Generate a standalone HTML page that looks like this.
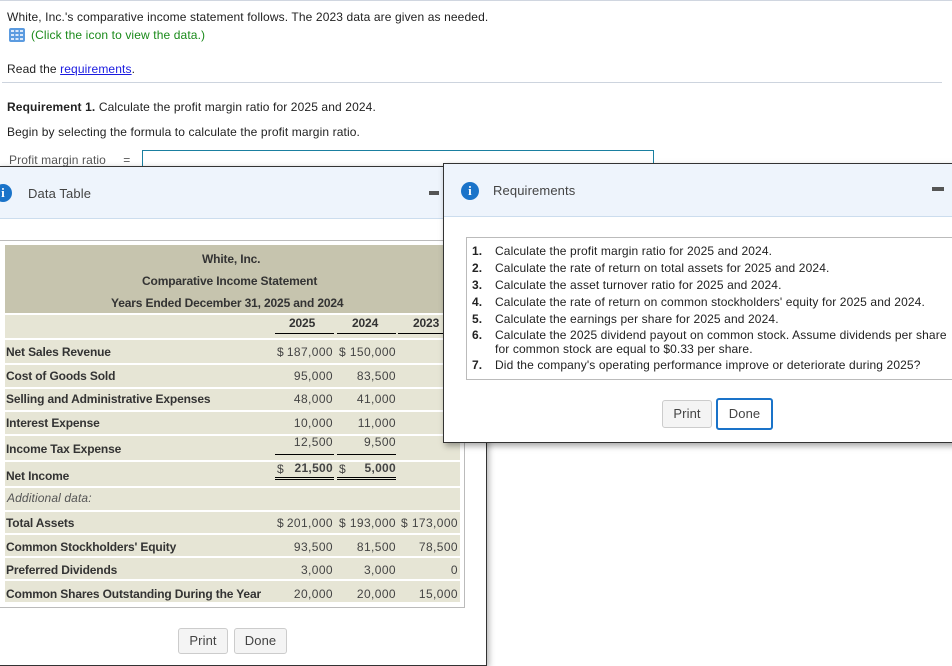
<!DOCTYPE html>
<html><head><style>
*{margin:0;padding:0;box-sizing:border-box}
body{width:952px;height:646px;overflow:hidden;background:#fff;font-family:"Liberation Sans",Arial,sans-serif;font-size:12px;color:#222;position:relative;letter-spacing:0.12px}
.a{position:absolute;white-space:nowrap}
.b{font-weight:bold;color:#333;letter-spacing:-0.15px}
.n{position:absolute;text-align:right;white-space:nowrap;color:#444;letter-spacing:0.4px}
.row{position:absolute;left:5px;width:455px;background:#e6e5d5;border-top:2px solid #fff}
.ul{position:absolute;height:1px;background:#000}
.icon{position:absolute;width:18px;height:18px;border-radius:50%;background:#1a73c9;color:#fff;font:bold 13px "Liberation Serif",serif;text-align:center;line-height:18px}
.btn{position:absolute;border:1px solid #ccc;border-radius:3px;background:#f4f4f4;color:#444;font-size:13px;text-align:center}
</style></head><body>
<div class="a" style="left:0;top:0;width:952px;height:1px;background:#d0d6e0"></div>
<div class="a" style="left:7px;top:10px">White, Inc.'s comparative income statement follows. The 2023 data are given as needed.</div>
<svg class="a" style="left:9px;top:28px" width="16" height="14" viewBox="0 0 16 14"><rect width="16" height="14" rx="2" fill="#5b9be0"/><g fill="#dbe9fb"><rect x="2" y="2" width="3" height="2"/><rect x="6.5" y="2" width="3" height="2"/><rect x="11" y="2" width="3" height="2"/><rect x="2" y="6" width="3" height="2"/><rect x="6.5" y="6" width="3" height="2"/><rect x="11" y="6" width="3" height="2"/><rect x="2" y="10" width="3" height="2"/><rect x="6.5" y="10" width="3" height="2"/><rect x="11" y="10" width="3" height="2"/></g></svg>
<div class="a" style="left:31px;top:28px;color:#1a8a1a">(Click the icon to view the data.)</div>
<div class="a" style="left:7px;top:62px">Read the <span style="color:#1a1ae0;text-decoration:underline">requirements</span>.</div>
<div class="a" style="left:2px;top:82px;width:940px;height:1px;background:#cdd4de"></div>
<div class="a" style="left:7px;top:100px"><b>Requirement 1.</b> Calculate the profit margin ratio for 2025 and 2024.</div>
<div class="a" style="left:7px;top:125px">Begin by selecting the formula to calculate the profit margin ratio.</div>
<div class="a" style="left:9px;top:153px;color:#555">Profit margin ratio &nbsp;&nbsp;&nbsp;&nbsp;=</div>
<div class="a" style="left:142px;top:150px;width:512px;height:20px;border:1px solid #1a7fa0"></div>

<div class="a" style="left:-2px;top:166px;width:489px;height:500px;background:#fff;border:1px solid #333;box-shadow:2px 2px 6px rgba(0,0,0,.3)"></div>
<div class="a" style="left:-1px;top:167px;width:487px;height:52px;background:#eef4fc;border-bottom:1px solid #cde"></div>
<div class="icon" style="left:-6px;top:184px">i</div>
<div class="a" style="left:28px;top:186px;font-size:13px;color:#444">Data Table</div>
<div class="a" style="left:429px;top:191px;width:10px;height:4px;background:#555"></div>
<div class="a" style="left:0;top:240px;width:465px;height:368px;border:1px solid #bbb;border-left:none"></div>
<div class="a" style="left:5px;top:245px;width:455px;height:68px;background:#c6c4ae"></div>
<div class="a b" style="left:202px;top:252px">White, Inc.</div>
<div class="a b" style="left:142px;top:274px">Comparative Income Statement</div>
<div class="a b" style="left:111px;top:296px">Years Ended December 31, 2025 and 2024</div>
<div class="row" style="top:313px;height:25px"></div>
<div class="a b" style="left:289px;top:316px">2025</div><div class="a b" style="left:352px;top:316px">2024</div><div class="a b" style="left:413px;top:316px">2023</div>
<div class="ul" style="left:275px;top:333px;width:59px"></div><div class="ul" style="left:337px;top:333px;width:59px"></div><div class="ul" style="left:398px;top:333px;width:62px"></div>
<div class="row" style="top:338px;height:25px"></div>
<div class="row" style="top:363px;height:24px"></div>
<div class="row" style="top:387px;height:23px"></div>
<div class="row" style="top:410px;height:24px"></div>
<div class="row" style="top:434px;height:26px"></div>
<div class="row" style="top:460px;height:26px"></div>
<div class="row" style="top:486px;height:24px"></div>
<div class="row" style="top:510px;height:23px"></div>
<div class="row" style="top:533px;height:23px"></div>
<div class="row" style="top:556px;height:23px"></div>
<div class="row" style="top:579px;height:23px"></div>
<div class="a b" style="left:6px;top:345px">Net Sales Revenue</div>
<div class="a b" style="left:6px;top:369px">Cost of Goods Sold</div>
<div class="a b" style="left:6px;top:392px">Selling and Administrative Expenses</div>
<div class="a b" style="left:6px;top:416px">Interest Expense</div>
<div class="a b" style="left:6px;top:442px">Income Tax Expense</div>
<div class="a b" style="left:6px;top:469px">Net Income</div>
<div class="a" style="left:7px;top:491px;font-style:italic;color:#555">Additional data:</div>
<div class="a b" style="left:6px;top:516px">Total Assets</div>
<div class="a b" style="left:6px;top:540px">Common Stockholders' Equity</div>
<div class="a b" style="left:6px;top:563px">Preferred Dividends</div>
<div class="a b" style="left:6px;top:587px">Common Shares Outstanding During the Year</div>
<div class="n" style="left:277px;top:345px">$</div><div class="n" style="right:619px;top:345px">187,000</div>
<div class="n" style="left:339px;top:345px">$</div><div class="n" style="right:556px;top:345px">150,000</div>
<div class="n" style="right:619px;top:369px">95,000</div><div class="n" style="right:556px;top:369px">83,500</div>
<div class="n" style="right:619px;top:392px">48,000</div><div class="n" style="right:556px;top:392px">41,000</div>
<div class="n" style="right:619px;top:416px">10,000</div><div class="n" style="right:556px;top:416px">11,000</div>
<div class="n" style="right:619px;top:435px">12,500</div><div class="n" style="right:556px;top:435px">9,500</div>
<div class="ul" style="left:275px;top:454px;width:59px"></div><div class="ul" style="left:337px;top:454px;width:59px"></div>
<div class="n" style="left:277px;top:462px">$</div><div class="n b" style="right:619px;top:461px;letter-spacing:0.3px">21,500</div>
<div class="n" style="left:339px;top:462px">$</div><div class="n b" style="right:556px;top:461px;letter-spacing:0.3px">5,000</div>
<div class="ul" style="left:275px;top:477px;width:59px"></div><div class="ul" style="left:337px;top:477px;width:59px"></div>
<div class="ul" style="left:275px;top:479px;width:59px"></div><div class="ul" style="left:337px;top:479px;width:59px"></div>
<div class="n" style="left:277px;top:516px">$</div><div class="n" style="right:619px;top:516px">201,000</div>
<div class="n" style="left:339px;top:516px">$</div><div class="n" style="right:556px;top:516px">193,000</div>
<div class="n" style="left:401px;top:516px">$</div><div class="n" style="right:494px;top:516px">173,000</div>
<div class="n" style="right:619px;top:540px">93,500</div><div class="n" style="right:556px;top:540px">81,500</div><div class="n" style="right:494px;top:540px">78,500</div>
<div class="n" style="right:619px;top:563px">3,000</div><div class="n" style="right:556px;top:563px">3,000</div><div class="n" style="right:494px;top:563px">0</div>
<div class="n" style="right:619px;top:587px">20,000</div><div class="n" style="right:556px;top:587px">20,000</div><div class="n" style="right:494px;top:587px">15,000</div>
<div class="btn" style="left:178px;top:628px;width:50px;height:26px;line-height:24px">Print</div>
<div class="btn" style="left:234px;top:628px;width:53px;height:26px;line-height:24px">Done</div>

<div class="a" style="left:443px;top:163px;width:515px;height:280px;background:#fff;border:1px solid #333;box-shadow:2px 3px 6px rgba(0,0,0,.35)"></div>
<div class="a" style="left:444px;top:164px;width:510px;height:53px;background:#eef4fc;border-bottom:1px solid #cde"></div>
<div class="icon" style="left:461px;top:182px">i</div>
<div class="a" style="left:493px;top:183px;font-size:13px;color:#444">Requirements</div>
<div class="a" style="left:932px;top:187px;width:12px;height:4px;background:#555"></div>
<div class="a" style="left:466px;top:237px;width:490px;height:143px;border:1px solid #bbb"></div>
<div class="a" style="left:472px;top:243px;line-height:17px;color:#222">
<div><b style="display:inline-block;width:23px">1.</b>Calculate the profit margin ratio for 2025 and 2024.</div>
<div><b style="display:inline-block;width:23px">2.</b>Calculate the rate of return on total assets for 2025 and 2024.</div>
<div><b style="display:inline-block;width:23px">3.</b>Calculate the asset turnover ratio for 2025 and 2024.</div>
<div><b style="display:inline-block;width:23px">4.</b>Calculate the rate of return on common stockholders' equity for 2025 and 2024.</div>
<div style="line-height:16px"><b style="display:inline-block;width:23px">5.</b>Calculate the earnings per share for 2025 and 2024.</div>
<div style="line-height:14px;margin-top:1px"><b style="display:inline-block;width:23px">6.</b>Calculate the 2025 dividend payout on common stock. Assume dividends per share<br><span style="padding-left:23px">for common stock are equal to $0.33 per share.</span></div>
<div style="margin-top:1px"><b style="display:inline-block;width:23px">7.</b>Did the company's operating performance improve or deteriorate during 2025?</div>
</div>
<div class="btn" style="left:662px;top:400px;width:50px;height:28px;line-height:26px">Print</div>
<div class="btn" style="left:716px;top:398px;width:57px;height:32px;line-height:28px;border:2px solid #1a73c9;background:#fff">Done</div>
</body></html>
